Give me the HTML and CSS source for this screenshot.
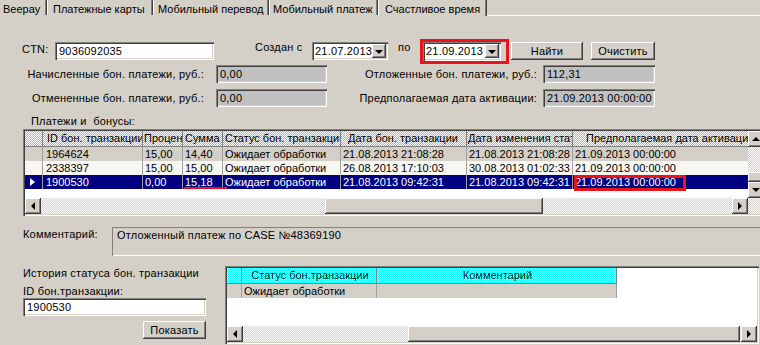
FILE: index.html
```html
<!DOCTYPE html>
<html lang="ru">
<head>
  <meta charset="UTF-8" />
  <title>Счастливое время</title>
  <link rel="stylesheet" href="styles.css">
</head>
<body>
<div class="window">

  <div class="tabs">
    <div class="tab tab-first">Beepay</div>
    <div class="tab tab-cards">Платежные карты</div>
    <div class="tab tab-transfer">Мобильный перевод</div>
    <div class="tab tab-payment">Мобильный платеж</div>
    <div class="tab tab-active">Счастливое время</div>
    <div class="tab-rest"></div>
  </div>

  <div class="search-row">
    <span class="lbl lbl-ctn">CTN:</span>
    <div class="edit edit-ctn">9036092035</div>
    <span class="lbl lbl-from">Создан с</span>
    <div class="date date-from"><span class="date-text">21.07.2013</span><span class="drop"></span></div>
    <span class="lbl lbl-to">по</span>
    <div class="mark-box">
      <div class="date date-to"><span class="date-text">21.09.2013</span><span class="drop"></span></div>
    </div>
    <div class="btn btn-find">Найти</div>
    <div class="btn btn-clear">Очистить</div>
  </div>

  <div class="totals">
    <span class="lbl-r">Начисленные бон. платежи, руб.:</span>
    <div class="field">0,00</div>
    <span class="lbl-r lbl-r2">Отложенные бон. платежи, руб.:</span>
    <div class="field">112,31</div>
    <span class="lbl-r">Отмененные бон. платежи, руб.:</span>
    <div class="field">0,00</div>
    <span class="lbl-r lbl-r2">Предполагаемая дата активации:</span>
    <div class="field">21.09.2013 00:00:00</div>
  </div>

  <div class="caption">Платежи и&nbsp; бонусы:</div>

  <div class="grid grid-main">
    <div class="cells">
      <div class="row head">
        <div class="c c-ind"></div>
        <div class="c c-id">ID бон. транзакции</div>
        <div class="c c-pct">Процент</div>
        <div class="c c-sum">Сумма</div>
        <div class="c c-st">Статус бон. транзакции</div>
        <div class="c c-dt">Дата бон. транзакции</div>
        <div class="c c-chg">Дата изменения статуса</div>
        <div class="c c-act">Предполагаемая дата активации</div>
      </div>
      <div class="row row-a">
        <div class="c c-ind"></div>
        <div class="c c-id">1964624</div>
        <div class="c c-pct">15,00</div>
        <div class="c c-sum">14,40</div>
        <div class="c c-st">Ожидает обработки</div>
        <div class="c c-dt">21.08.2013 21:08:28</div>
        <div class="c c-chg">21.08.2013 21:08:28</div>
        <div class="c c-act">21.09.2013 00:00:00</div>
      </div>
      <div class="row row-b">
        <div class="c c-ind"></div>
        <div class="c c-id">2338397</div>
        <div class="c c-pct">15,00</div>
        <div class="c c-sum">15,00</div>
        <div class="c c-st">Ожидает обработки</div>
        <div class="c c-dt">26.08.2013 17:10:03</div>
        <div class="c c-chg">30.08.2013 01:02:33</div>
        <div class="c c-act">21.09.2013 00:00:00</div>
      </div>
      <div class="row row-sel">
        <div class="c c-ind"><span class="pointer"></span></div>
        <div class="c c-id">1900530</div>
        <div class="c c-pct">0,00</div>
        <div class="c c-sum marked-under">15,18</div>
        <div class="c c-st">Ожидает обработки</div>
        <div class="c c-dt">21.08.2013 09:42:31</div>
        <div class="c c-chg">21.08.2013 09:42:31</div>
        <div class="c c-act marked-box">21.09.2013 00:00:00</div>
      </div>
    </div>

    <div class="vscroll">
      <div class="sb-btn"><span class="arr arr-up"></span></div>
      <div class="track"></div>
      <div class="thumb thumb-v"></div>
      <div class="sb-btn"><span class="arr arr-down"></span></div>
    </div>

    <div class="hscroll">
      <div class="sb-btn"><span class="arr arr-left"></span></div>
      <div class="track track-main"></div>
      <div class="thumb thumb-main"></div>
      <div class="track"></div>
      <div class="sb-btn"><span class="arr arr-right"></span></div>
    </div>

    <div class="track"></div>
  </div>

  <div class="comment-row">
    <span class="lbl-comment">Комментарий:</span>
    <div class="comment-box">Отложенный платеж по CASE №48369190</div>
  </div>

  <div class="history">
    <div class="history-side">
      <div class="line">История статуса бон. транзакции</div>
      <div class="line line-id">ID бон.транзакции:</div>
      <div class="edit edit-id">1900530</div>
      <div class="btn btn-show">Показать</div>
    </div>

    <div class="grid grid-hist">
      <div class="cells">
        <div class="row head head-hist">
          <div class="c h-ind"></div>
          <div class="c h-st">Статус бон.транзакции</div>
          <div class="c h-cm">Комментарий</div>
        </div>
        <div class="row row-a">
          <div class="c h-ind"></div>
          <div class="c h-st">Ожидает обработки</div>
          <div class="c h-cm"></div>
        </div>
      </div>
      <div class="hscroll">
        <div class="sb-btn"><span class="arr arr-left"></span></div>
        <div class="track track-hist"></div>
        <div class="thumb thumb-hist"></div>
        <div class="track"></div>
        <div class="sb-btn"><span class="arr arr-right"></span></div>
      </div>
    </div>
  </div>

</div>
</body>
</html>
```

FILE: styles.css
```css
*, *::before, *::after {
  box-sizing: border-box;
}
body {
  margin: 0;
  background: #d4d0c8;
  font-family: "Liberation Sans", Arial, sans-serif;
  font-size: 11px;
  letter-spacing: 0.2px;
  color: #000;
}
.window {
  width: 760px;
  height: 345px;
  overflow: hidden;
}

/* 3d borders */
.edit, .date, .field, .grid {
  box-shadow: inset 1px 1px #808080, inset 2px 2px #404040, inset -1px -1px #fff, inset -2px -2px #d4d0c8;
}
.btn, .sb-btn, .drop, .thumb {
  background: #d4d0c8;
  box-shadow: inset -1px -1px #404040, inset 1px 1px #fff, inset -2px -2px #808080;
}

/* tabs */
.tabs {
  display: flex;
  height: 16px;
  letter-spacing: 0;
}
.tab {
  flex: none;
  height: 15px;
  line-height: 18px;
  white-space: nowrap;
  border-right: 1px solid #404040;
  box-shadow: inset -1px 0 #808080;
}
.tab + .tab {
  border-left: 1px solid #fff;
}
.tab-first { width: 47px; padding-left: 3px; }
.tab-cards { width: 106px; padding-left: 5px; }
.tab-transfer { width: 116px; padding-left: 4px; }
.tab-payment { width: 109px; padding-left: 3px; }
.tab-active { width: 109px; padding-left: 6px; height: 16px; }
.tab-rest {
  flex: 1;
  height: 16px;
  border-bottom: 1px solid #fff;
}

/* search row */
.search-row {
  display: flex;
  align-items: flex-start;
  height: 25px;
  margin-top: 23px;
  padding-left: 22px;
}
.lbl {
  flex: none;
  line-height: 16px;
  white-space: nowrap;
}
.lbl-ctn { width: 33px; margin-top: 2px; }
.lbl-from { width: 57px; margin-left: 41px; }
.lbl-to { width: 22px; margin-left: 10px; }
.edit {
  flex: none;
  height: 18px;
  padding: 2px 4px;
  line-height: 14px;
  background: #fff;
}
.edit-ctn { width: 159px; margin-top: 3px; }
.date {
  flex: none;
  display: flex;
  height: 18px;
  padding: 2px;
  line-height: 14px;
  background: #fff;
}
.date-from { width: 76px; margin-top: 3px; }
.date-text {
  flex: 1;
  padding-left: 1px;
}
.drop {
  flex: none;
  width: 14px;
  height: 14px;
  display: flex;
  align-items: center;
  justify-content: center;
}
.drop::before {
  content: "";
  border-top: 4px solid #000;
  border-left: 4px solid transparent;
  border-right: 4px solid transparent;
  margin-top: 1px;
}
.mark-box {
  flex: none;
  width: 89px;
  height: 25px;
  padding-right: 5px;
  border: 3px solid #e8141c;
}
.date-to { width: 78px; height: 19px; }
.btn {
  flex: none;
  height: 18px;
  padding-top: 1px;
  line-height: 17px;
  text-align: center;
  white-space: nowrap;
}
.btn-find { width: 72px; margin-top: 3px; margin-left: 2px; }
.btn-clear { width: 64px; margin-top: 3px; margin-left: 8px; }

/* totals */
.totals {
  display: grid;
  grid-template-columns: 216px 111px 216px 112px;
  grid-auto-rows: 18px;
  row-gap: 6px;
  margin-top: 1px;
}
.lbl-r {
  padding-right: 12px;
  line-height: 18px;
  text-align: right;
  white-space: nowrap;
}
.lbl-r2 { padding-right: 6px; }
.field {
  padding: 1px 4px 0;
  line-height: 16px;
  background: #c0c0c0;
  white-space: nowrap;
}

.caption {
  margin-top: 7px;
  padding-left: 31px;
  line-height: 14px;
  white-space: pre;
}

/* grids */
.grid {
  display: grid;
  padding: 2px;
  background: #fff;
  letter-spacing: 0;
}
.grid-main {
  width: 741px;
  height: 87px;
  margin: 1px 0 0 23px;
  grid-template-columns: 723px 16px;
  grid-template-rows: 67px 16px;
}
.cells {
  overflow: hidden;
}
.row {
  display: flex;
  height: 14px;
  line-height: 14px;
}
.row.head {
  height: 16px;
  line-height: 15px;
  border-bottom: 1px solid #808080;
  background: repeating-conic-gradient(#00ffff 0 25%, #fff 0 50%) 0 0 / 2px 2px;
}
.c {
  flex: none;
  padding-left: 2px;
  white-space: nowrap;
  overflow: hidden;
  border-right: 1px solid #a0a0a0;
}
.head .c {
  border-right-color: #808080;
}
.row-a { background: #d4d0c8; }
.row-b { background: #f7f6f1; }
.row-sel {
  background: #000080;
  color: #fff;
}
.c-ind { width: 18px; display: flex; align-items: center; padding-left: 5px; }
.c-id { width: 100px; padding-left: 3px; }
.c-pct { width: 40px; }
.c-sum { width: 40px; }
.c-st { width: 118px; }
.c-dt { width: 126px; }
.c-chg { width: 106px; }
.c-act { width: 175px; border-right: 0; }
.head .c-id { padding-left: 4px; }
.head .c-pct { padding-left: 1px; }
.head .c-dt { padding-left: 7px; }
.head .c-chg { padding-left: 1px; }
.head .c-act { padding-left: 13px; }
.pointer {
  border-left: 5px solid #fff;
  border-top: 4px solid transparent;
  border-bottom: 4px solid transparent;
}

/* red marks drawn over the grid */
.marked-under, .marked-box {
  position: relative;
  overflow: visible;
}
.marked-under::after {
  content: "";
  position: absolute;
  left: 1px;
  bottom: 0;
  width: 43px;
  height: 2px;
  background: #e8141c;
}
.marked-box::after {
  content: "";
  position: absolute;
  left: 1px;
  top: 0;
  width: 112px;
  height: 16px;
  border: 3px solid #e8141c;
}

/* scrollbars */
.vscroll, .hscroll {
  display: flex;
}
.vscroll { flex-direction: column; }
.track {
  flex: 1;
  background: repeating-conic-gradient(#fff 0 25%, #d4d0c8 0 50%) 0 0 / 2px 2px;
}
.sb-btn {
  flex: none;
  width: 16px;
  height: 16px;
  display: flex;
  align-items: center;
  justify-content: center;
}
.thumb { flex: none; }
.thumb-v { height: 10px; }
.track-main { flex: none; width: 284px; }
.thumb-main { width: 218px; }
.arr { width: 0; height: 0; }
.arr-up { border-bottom: 4px solid #000; border-left: 4px solid transparent; border-right: 4px solid transparent; }
.arr-down { border-top: 4px solid #000; border-left: 4px solid transparent; border-right: 4px solid transparent; }
.arr-left { border-right: 4px solid #000; border-top: 4px solid transparent; border-bottom: 4px solid transparent; }
.arr-right { border-left: 4px solid #000; border-top: 4px solid transparent; border-bottom: 4px solid transparent; }

/* comment */
.comment-row {
  display: flex;
  height: 29px;
  margin-top: 11px;
  padding-left: 23px;
}
.lbl-comment {
  flex: none;
  width: 89px;
  line-height: 14px;
}
.comment-box {
  flex: none;
  width: 660px;
  height: 29px;
  padding: 1px 5px;
  line-height: 14px;
  box-shadow: inset 1px 1px #808080, inset -1px -1px #fff;
}

/* history */
.history {
  display: flex;
  margin-top: 10px;
  padding-left: 23px;
}
.history-side {
  flex: none;
  width: 183px;
  display: flex;
  flex-direction: column;
}
.line {
  line-height: 14px;
  white-space: nowrap;
}
.line-id { margin-top: 4px; }
.edit-id { width: 183px; }
.btn-show {
  width: 63px;
  margin-top: 5px;
  align-self: flex-end;
}
.grid-hist {
  flex: none;
  width: 534px;
  height: 78px;
  margin-left: 19px;
  grid-template-columns: 530px;
  grid-template-rows: 58px 16px;
}
.head-hist {
  width: 390px;
  height: 15px;
  line-height: 13px;
}
.head-hist .c {
  text-align: center;
}
.grid-hist .row-a {
  width: 390px;
}
.h-ind { width: 15px; }
.h-st { width: 135px; }
.h-cm { width: 240px; }
.track-hist { flex: none; width: 165px; }
.thumb-hist { width: 332px; }
```
